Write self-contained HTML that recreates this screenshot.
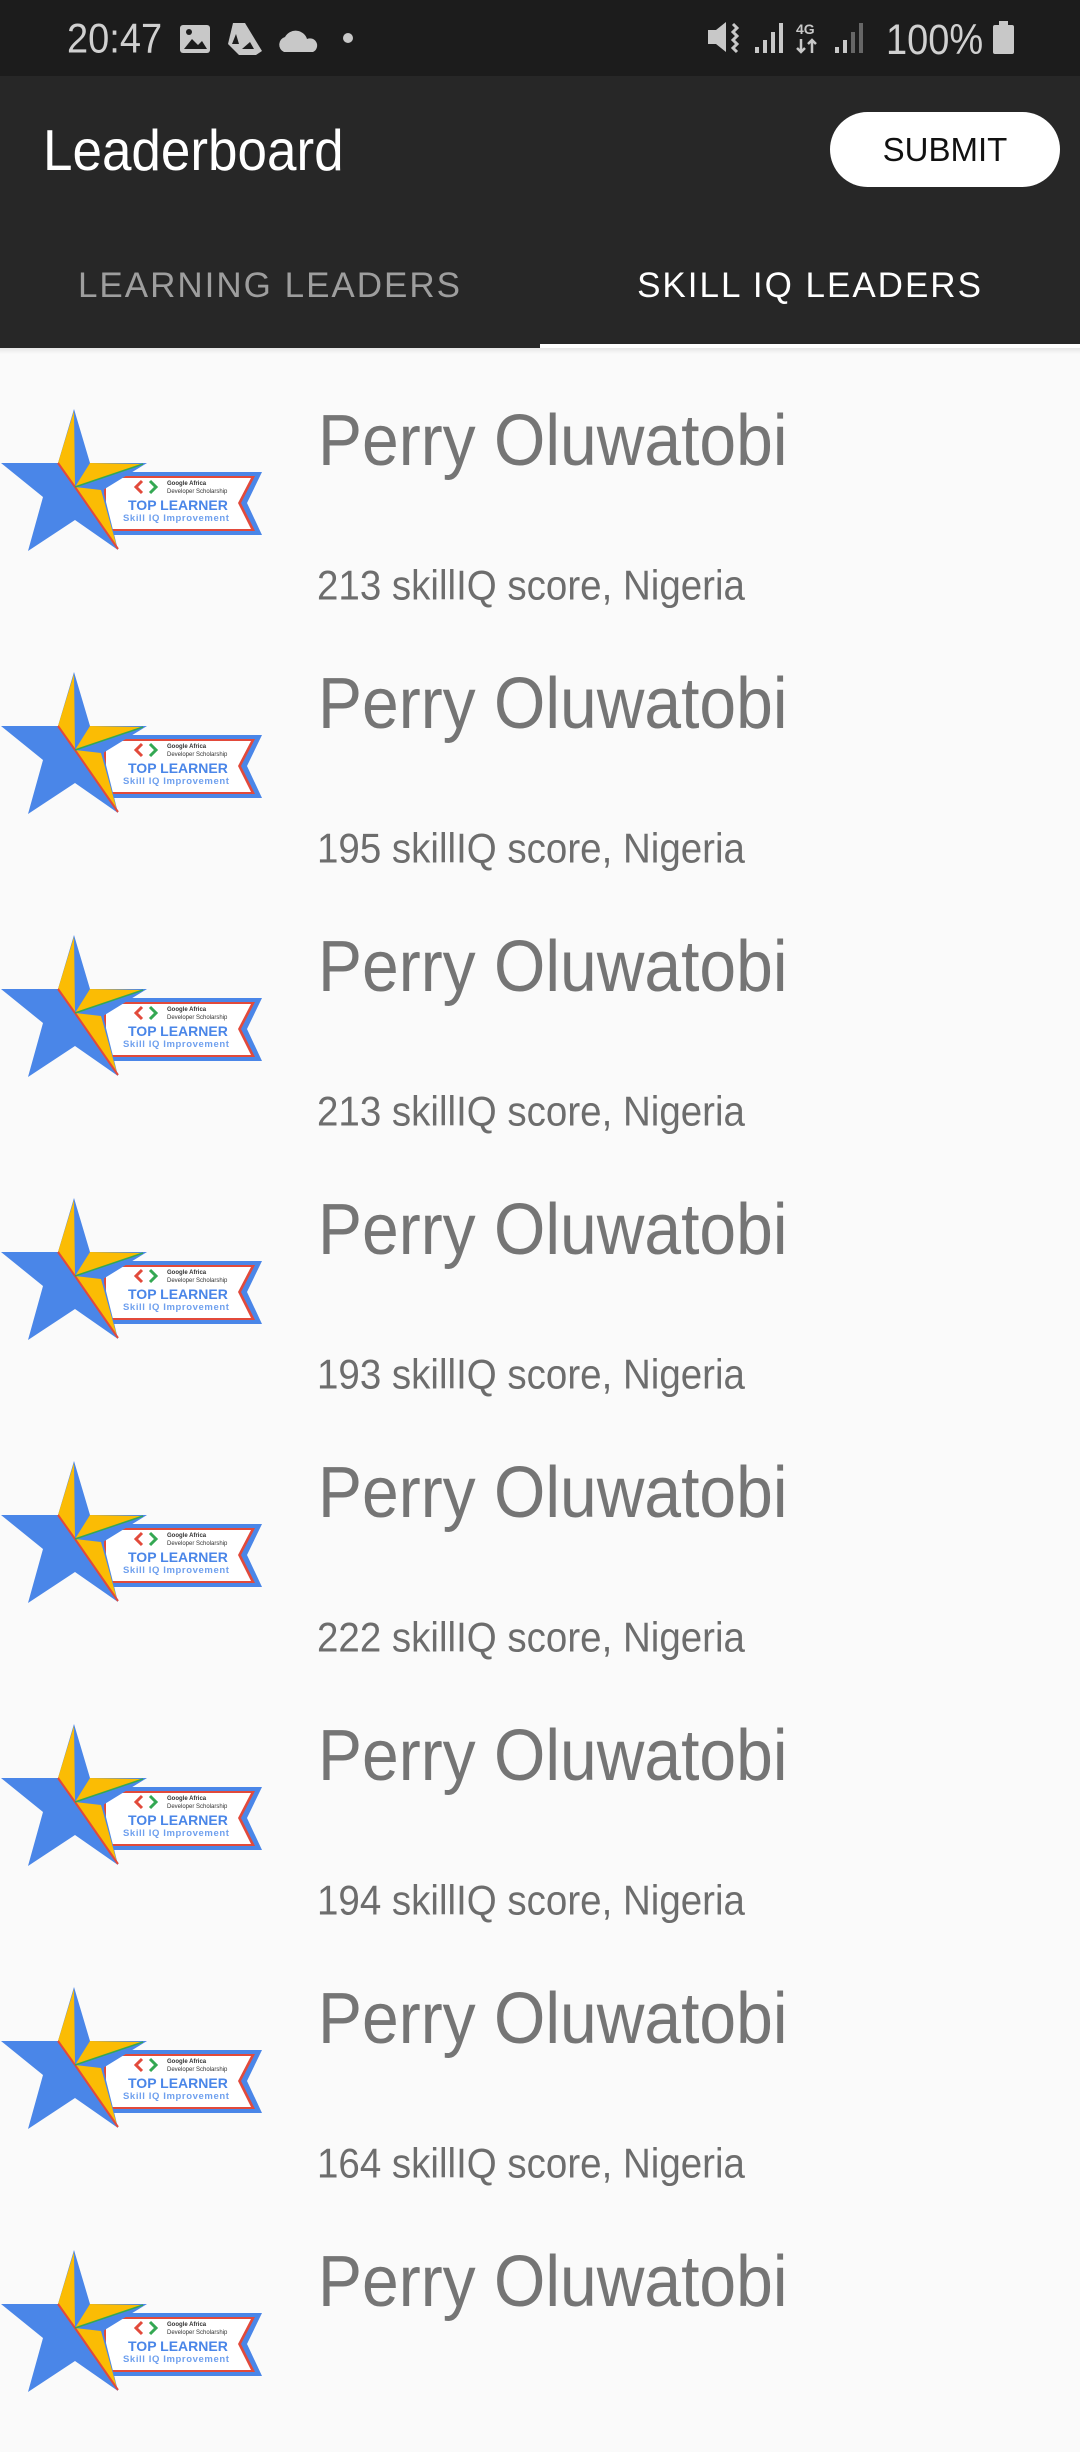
<!DOCTYPE html>
<html><head><meta charset="utf-8"><style>
*{margin:0;padding:0;box-sizing:border-box}
body{width:1080px;height:2400px;overflow:hidden;background:#fafafa;font-family:"Liberation Sans",sans-serif;position:relative}
.sb{position:absolute;left:0;top:0;width:1080px;height:76px;background:#1c1c1c;color:#cfcfcf}
.tb{position:absolute;left:0;top:76px;width:1080px;height:272px;background:#272727}
.abs{position:absolute}
.row{position:absolute;left:0;width:1080px;height:263px}
.name{position:absolute;left:318px;top:50px;font-size:66px;color:#757575;white-space:nowrap;transform:scale(1,1.1);transform-origin:0 0}
.score{position:absolute;left:317px;top:215px;font-size:38.5px;color:#6d6d6d;white-space:nowrap;transform:scale(1,1.08);transform-origin:0 0}
.badge{position:absolute;left:0;top:60px}
</style></head><body>
<div class="sb">
 <div class="abs" style="left:67px;top:16px;font-size:38px;color:#d0d0d0;transform:scale(1,1.1);transform-origin:0 0">20:47</div>
 <svg class="abs" style="left:178px;top:22px" width="180" height="34" viewBox="0 0 180 34">
  <rect x="2" y="3" width="30" height="28" rx="3" fill="#c8c8c8"/><path d="M6 27 L14 17 L20 23 L24 19 L29 27Z" fill="#1c1c1c"/><circle cx="11" cy="10" r="3" fill="#1c1c1c"/>
  <path d="M55 1 L67 1 L84 29 L78 33 L61 33 L50 22Z" fill="#c8c8c8"/><path d="M58 12 L54 22 L61 22Z M64 27 L76 27 L72 20Z" fill="#1c1c1c"/>
  <path d="M106 30 a8 8 0 0 1 1-15 a12 12 0 0 1 22 2 a7 7 0 0 1 6 13Z" fill="#c8c8c8"/>
 </svg>
 <div class="abs" style="left:343px;top:33px;width:10px;height:10px;border-radius:5px;background:#c8c8c8"></div>
 <svg class="abs" style="left:706px;top:20px" width="170" height="36" viewBox="0 0 170 36">
  <path d="M2 10 L10 10 L20 2 L20 32 L10 24 L2 24Z" fill="#c8c8c8"/><path d="M27 4 l4 4 -4 4 4 4 -4 4 4 4 -4 4 4 4" stroke="#c8c8c8" stroke-width="3" fill="none"/>
  <rect x="49" y="27" width="4" height="6" fill="#c8c8c8"/><rect x="57" y="20" width="4" height="13" fill="#c8c8c8"/><rect x="65" y="12" width="4" height="21" fill="#c8c8c8"/><rect x="73" y="3" width="4" height="30" fill="#c8c8c8"/>
  <text x="90" y="14" font-size="14" font-weight="bold" fill="#c8c8c8" font-family="Liberation Sans">4G</text>
  <path d="M95 19 v13 M91 28 l4 4 4-4 M106 33 v-13 M102 24 l4-4 4 4" stroke="#c8c8c8" stroke-width="2.5" fill="none"/>
  <rect x="129" y="27" width="4" height="6" fill="#c8c8c8"/><rect x="137" y="20" width="4" height="13" fill="#c8c8c8"/><rect x="145" y="12" width="4" height="21" fill="#666"/><rect x="153" y="3" width="4" height="30" fill="#666"/>
 </svg>
 <div class="abs" style="left:886px;top:17px;font-size:38px;color:#d0d0d0;transform:scale(1,1.12);transform-origin:0 0">100%</div>
 <div class="abs" style="left:993px;top:25px;width:21px;height:29px;background:#c8c8c8;border-radius:2px"></div>
 <div class="abs" style="left:999px;top:21px;width:9px;height:5px;background:#c8c8c8"></div>
</div>
<div class="tb">
 <div class="abs" style="left:43px;top:42px;font-size:53px;color:#fff;transform:scale(1,1.08);transform-origin:0 0">Leaderboard</div>
 <div class="abs" style="left:830px;top:36px;width:230px;height:75px;border-radius:38px;background:#fff;color:#111;font-size:33px;text-align:center;line-height:75px">SUBMIT</div>
 <div class="abs" style="left:0;top:190px;width:540px;text-align:center;font-size:35px;letter-spacing:2px;color:#9e9e9e">LEARNING LEADERS</div>
 <div class="abs" style="left:540px;top:190px;width:540px;text-align:center;font-size:35px;letter-spacing:2px;color:#fff">SKILL IQ LEADERS</div>
 <div class="abs" style="left:540px;top:268px;width:540px;height:5px;background:#fff"></div>
</div>
<div class="abs" style="left:0;top:348px;width:1080px;height:6px;background:linear-gradient(#e6e6e6,#fafafa)"></div>

<svg width="0" height="0" style="position:absolute"><defs>
<g id="bd">
 <path d="M100 64 L262 64 L247 95 L262 127 L100 127Z" fill="#4a86e8"/>
 <path d="M104 68 L255 68 L241 95 L255 123 L104 123Z" fill="#e24a3b"/>
 <path d="M106 70 L251 70 L238 95 L251 121 L106 121Z" fill="#fff"/>
 <path d="M142 73 l-6 6 6 6" stroke="#e24a3b" stroke-width="3" fill="none"/><path d="M150 73 l6 6 -6 6" stroke="#34a853" stroke-width="3" fill="none"/>
 <text x="167" y="77" font-size="6" font-weight="bold" fill="#333" font-family="Liberation Sans">Google Africa</text>
 <text x="167" y="85" font-size="6" fill="#333" font-family="Liberation Sans">Developer Scholarship</text>
 <text x="128" y="102" font-size="14" font-weight="bold" fill="#4a86e8" font-family="Liberation Sans">TOP LEARNER</text>
 <text x="123" y="113" font-size="9.5" font-weight="bold" fill="#6fa0ee" font-family="Liberation Sans" letter-spacing="0.6">Skill IQ Improvement</text>
 <path d="M74 1 L90 55 L147 55 L103 82 L118 142 L75 112 L28 143 L43 89 L1 55 L58 55Z" fill="#4a86e8"/>
 <path d="M74 3 L58 55 L75 79Z" fill="#fbbc04"/>
 <path d="M90 55 L143 56 L75 79Z" fill="#fbbc04"/>
 <path d="M75 79 L101 82 L117 139Z" fill="#fbbc04"/>
 <path d="M58 55 L75 79 L118 141" stroke="#e24a3b" stroke-width="2" fill="none"/>
 <path d="M143 56 L75 79" stroke="#34a853" stroke-width="1.5" fill="none"/>
</g></defs></svg>

<div class="row" style="top:348px"><svg class="badge" width="263" height="150"><use href="#bd"/></svg><div class="name">Perry Oluwatobi</div><div class="score">213 skillIQ score, Nigeria</div></div>
<div class="row" style="top:611px"><svg class="badge" width="263" height="150"><use href="#bd"/></svg><div class="name">Perry Oluwatobi</div><div class="score">195 skillIQ score, Nigeria</div></div>
<div class="row" style="top:874px"><svg class="badge" width="263" height="150"><use href="#bd"/></svg><div class="name">Perry Oluwatobi</div><div class="score">213 skillIQ score, Nigeria</div></div>
<div class="row" style="top:1137px"><svg class="badge" width="263" height="150"><use href="#bd"/></svg><div class="name">Perry Oluwatobi</div><div class="score">193 skillIQ score, Nigeria</div></div>
<div class="row" style="top:1400px"><svg class="badge" width="263" height="150"><use href="#bd"/></svg><div class="name">Perry Oluwatobi</div><div class="score">222 skillIQ score, Nigeria</div></div>
<div class="row" style="top:1663px"><svg class="badge" width="263" height="150"><use href="#bd"/></svg><div class="name">Perry Oluwatobi</div><div class="score">194 skillIQ score, Nigeria</div></div>
<div class="row" style="top:1926px"><svg class="badge" width="263" height="150"><use href="#bd"/></svg><div class="name">Perry Oluwatobi</div><div class="score">164 skillIQ score, Nigeria</div></div>
<div class="row" style="top:2189px"><svg class="badge" width="263" height="150"><use href="#bd"/></svg><div class="name">Perry Oluwatobi</div></div>
</body></html>
